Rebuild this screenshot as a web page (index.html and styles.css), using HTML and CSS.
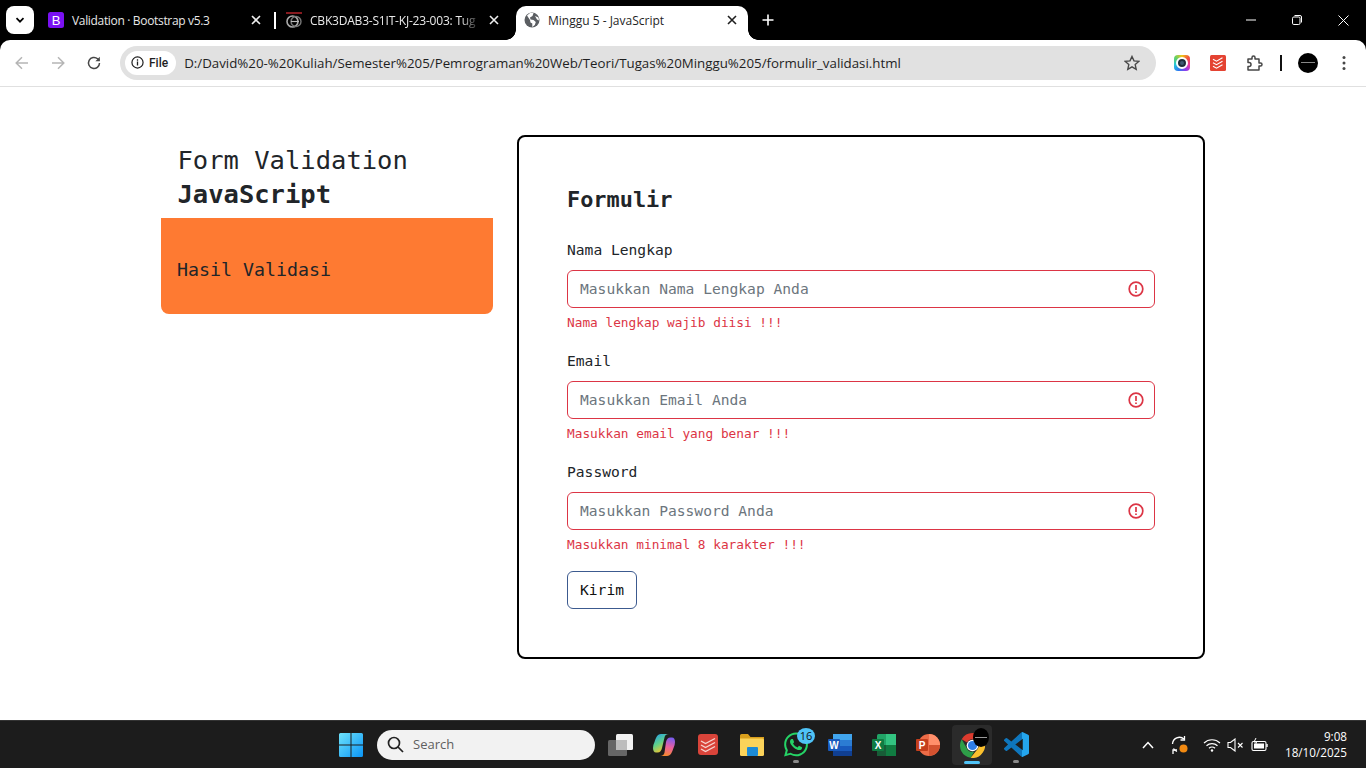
FILE: index.html
```html
<!DOCTYPE html>
<html lang="id">
<head>
<meta charset="utf-8">
<title>Minggu 5 - JavaScript</title>
<link rel="stylesheet" href="styles.css">
</head>
<body>
<div class="tabstrip">
  <div class="tabsearch"><svg width="12" height="12" viewBox="0 0 12 12"><path d="M2.500 4.200 6 7.700l3.500-3.500" fill="none" stroke="#000" stroke-width="1.700"/></svg></div>
  <div class="tab t1">
    <svg class="fav" width="16" height="16" viewBox="0 0 16 16"><rect width="16" height="16" rx="2.500" fill="#7a11f2"/><text x="8" y="13" text-anchor="middle" class="favb">B</text></svg>
    <span class="tabtitle">Validation · Bootstrap v5.3</span>
    <svg class="tabx" width="10" height="10" viewBox="0 0 10 10"><path d="M1 1l8 8M9 1l-8 8" stroke="#eee" stroke-width="1.600"/></svg>
  </div>
  <div class="tabsep"></div>
  <div class="tab t2">
    <svg class="fav" width="16" height="16" viewBox="0 0 16 16"><path d="M0 1h16" stroke="#b3232a" stroke-width="1.500"/><circle cx="6.500" cy="9.500" r="5.500" fill="none" stroke="#aaa" stroke-width="1.600"/><circle cx="10" cy="9.500" r="5" fill="none" stroke="#777" stroke-width="1.400"/><path d="M5 9.500h8" stroke="#bbb" stroke-width="1.200"/></svg>
    <span class="tabtitle fade">CBK3DAB3-S1IT-KJ-23-003: Tug</span>
    <svg class="tabx" width="10" height="10" viewBox="0 0 10 10"><path d="M1 1l8 8M9 1l-8 8" stroke="#eee" stroke-width="1.600"/></svg>
  </div>
  <div class="tab active">
    <svg class="fav" width="16" height="16" viewBox="0 0 16 16"><circle cx="8" cy="8" r="7.500" fill="#5b5e62"/><path d="M3 3.500 6 8l.5 2.500 1.800 1V15l2.500-2 1-3L9.500 8l-3-.5L6 5.500 8.500 4l1-3L6 1zM11 4l3.500 1.500.5 3-2-1z" fill="#fff"/></svg>
    <span class="tabtitle">Minggu 5 - JavaScript</span>
    <svg class="tabx" width="10" height="10" viewBox="0 0 10 10"><path d="M1 1l8 8M9 1l-8 8" stroke="#1f1f1f" stroke-width="1.600"/></svg>
  </div>
  <svg class="newtab" width="12" height="12" viewBox="0 0 12 12"><path d="M6 .5v11M.5 6h11" stroke="#fff" stroke-width="1.600"/></svg>
  <div class="winctl">
    <svg width="10" height="10" viewBox="0 0 10 10"><path d="M0 5h10" stroke="#fff"/></svg>
    <svg width="10" height="10" viewBox="0 0 10 10"><rect x=".5" y="2" width="7.500" height="7.500" rx="1.300" fill="none" stroke="#fff"/><path d="M2.500.5H8A1.500 1.500 0 0 1 9.500 2v5.500" fill="none" stroke="#fff"/></svg>
    <svg width="11" height="11" viewBox="0 0 11 11"><path d="M.5.5l10 10M10.500.5l-10 10" stroke="#fff"/></svg>
  </div>
</div>
<div class="toolbar">
  <svg class="navicon first" width="16" height="16" viewBox="0 0 16 16"><path d="M14 8H2.500M8 2.200 2.200 8 8 13.800" fill="none" stroke="#b5b5b5" stroke-width="1.500"/></svg>
  <svg class="navicon" width="16" height="16" viewBox="0 0 16 16"><path d="M2 8h11.500M8 2.200 13.800 8 8 13.800" fill="none" stroke="#b5b5b5" stroke-width="1.500"/></svg>
  <svg class="navicon" width="16" height="16" viewBox="0 0 16 16"><path d="M13.500 8A5.500 5.500 0 1 1 11.600 3.800L13.500 5.500" fill="none" stroke="#474747" stroke-width="1.500"/><path d="M13.800 1.800v4.400H9.400z" fill="#474747"/></svg>
  <div class="omnibox">
    <div class="chip"><svg width="13" height="13" viewBox="0 0 14 14"><circle cx="7" cy="7" r="6" fill="none" stroke="#1f1f1f" stroke-width="1.300"/><path d="M7 6v4.200M7 3.500v1.500" stroke="#1f1f1f" stroke-width="1.400"/></svg><span>File</span></div>
    <span class="url">D:/David%20-%20Kuliah/Semester%205/Pemrograman%20Web/Teori/Tugas%20Minggu%205/formulir_validasi.html</span>
    <svg class="star" width="16" height="16" viewBox="0 0 16 16"><path d="M8 1.500l2 4.400 4.800.5-3.600 3.200 1 4.700L8 11.900l-4.200 2.400 1-4.700L1.200 6.400 6 5.900z" fill="none" stroke="#474747" stroke-width="1.400"/></svg>
  </div>
  <div class="exts">
    <div class="rainbow"><span class="lens"></span></div>
    <svg class="todo" width="16" height="16" viewBox="0 0 16 16"><rect width="16" height="16" rx="1.500" fill="#e44332"/><path d="M3 4.200 6.500 6.200 12.500 2.800M3 7.700 6.500 9.700 12.500 6.300M3 11.200 6.500 13.200 12.500 9.800" fill="none" stroke="#fff" stroke-width="1.100"/></svg>
    <svg width="18" height="18" viewBox="0 0 18 18"><path d="M2 5h4V3.500a1.500 1.500 0 0 1 3 0V5h4v4h1.500a1.500 1.500 0 0 1 0 3H13v4H2v-3.500h1a1.500 1.500 0 0 0 0-4H2z" fill="none" stroke="#474747" stroke-width="1.500" stroke-linejoin="round"/></svg>
    <div class="extsep"></div>
    <div class="avatar"><span class="avatar-line"></span></div>
    <svg width="4" height="16" viewBox="0 0 4 16"><circle cx="2" cy="2.500" r="1.500" fill="#474747"/><circle cx="2" cy="8" r="1.500" fill="#474747"/><circle cx="2" cy="13.500" r="1.500" fill="#474747"/></svg>
  </div>
</div>
<main class="page">
  <div class="layout">
    <aside class="side">
      <h1 class="heading">Form Validation <strong>JavaScript</strong></h1>
      <div class="result">Hasil Validasi</div>
    </aside>
    <section class="card">
      <h2 class="card-title">Formulir</h2>
      <div class="field">
        <label class="label">Nama Lengkap</label>
        <div class="input"><span>Masukkan Nama Lengkap Anda</span><svg class="err" width="16" height="16" viewBox="0 0 16 16"><circle cx="8" cy="8" r="6.800" fill="none" stroke="#dc3545" stroke-width="1.700"/><path d="M8 4v5M8 10.400v1.700" stroke="#dc3545" stroke-width="1.700"/></svg></div>
        <div class="msg">Nama lengkap wajib diisi !!!</div>
      </div>
      <div class="field">
        <label class="label">Email</label>
        <div class="input"><span>Masukkan Email Anda</span><svg class="err" width="16" height="16" viewBox="0 0 16 16"><circle cx="8" cy="8" r="6.800" fill="none" stroke="#dc3545" stroke-width="1.700"/><path d="M8 4v5M8 10.400v1.700" stroke="#dc3545" stroke-width="1.700"/></svg></div>
        <div class="msg">Masukkan email yang benar !!!</div>
      </div>
      <div class="field">
        <label class="label">Password</label>
        <div class="input"><span>Masukkan Password Anda</span><svg class="err" width="16" height="16" viewBox="0 0 16 16"><circle cx="8" cy="8" r="6.800" fill="none" stroke="#dc3545" stroke-width="1.700"/><path d="M8 4v5M8 10.400v1.700" stroke="#dc3545" stroke-width="1.700"/></svg></div>
        <div class="msg">Masukkan minimal 8 karakter !!!</div>
      </div>
      <button class="btn" type="button">Kirim</button>
    </section>
  </div>
</main>
<footer class="taskbar">
  <div class="tasks">
    <svg width="24" height="24" viewBox="0 0 24 24"><defs><linearGradient id="win" x1="0" y1="0" x2="1" y2="1"><stop offset="0" stop-color="#6fe3fb"/><stop offset="1" stop-color="#0a94f5"/></linearGradient></defs><path d="M0 1.500A1.500 1.500 0 0 1 1.500 0h10v11.500H0zM12.500 0h10A1.500 1.500 0 0 1 24 1.500v10H12.500zM0 12.500h11.500V24h-10A1.500 1.500 0 0 1 0 22.500zM12.500 12.500H24v10a1.500 1.500 0 0 1-1.500 1.500h-10z" fill="url(#win)"/></svg>
    <div class="search"><svg width="17" height="17" viewBox="0 0 17 17"><circle cx="7" cy="7" r="5.500" fill="none" stroke="#222" stroke-width="1.700"/><path d="M11 11l5 5" stroke="#222" stroke-width="1.700"/></svg><span>Search</span></div>
    <div class="cell first-cell"><svg width="25" height="22" viewBox="0 0 25 22"><rect x="8" width="17" height="16" rx="1.500" fill="#f2f2f2"/><rect y="6" width="19" height="16" rx="1.500" fill="#666"/><rect x="8" y="6" width="11" height="10" fill="#bdbdbd"/></svg></div>
    <div class="cell"><svg width="22" height="24" viewBox="0 0 22 24"><defs><linearGradient id="cpa" x1="0" y1="0" x2=".5" y2="1"><stop offset="0" stop-color="#1f9cf0"/><stop offset=".55" stop-color="#5fd08a"/><stop offset="1" stop-color="#f5c52c"/></linearGradient><linearGradient id="cpb" x1=".6" y1="0" x2=".4" y2="1"><stop offset="0" stop-color="#7a5cf0"/><stop offset=".5" stop-color="#ec5f9e"/><stop offset="1" stop-color="#f58a2c"/></linearGradient></defs><path d="M14 23H7c3 0 4-1.500 4.500-3.500L13 9c.5-2.500 2-4.500 4.500-4.500H19c2 0 3 2 3 4.500 0 2-.5 4-1.500 6C19 19 18 23 14 23z" fill="url(#cpb)"/><path d="M8 1h8c-3 0-4 1.500-4.500 3.500L9 15c-.5 2.500-2 4.500-4.500 4.500H3C1 19.500 0 17.500 0 15c0-2 .5-4 1.500-6C3 5 4 1 8 1z" fill="url(#cpa)"/></svg></div>
    <div class="cell"><svg width="20" height="21" viewBox="0 0 20 21"><rect width="20" height="21" rx="3" fill="#d9443a"/><path d="M3 7l4.500 2.500L17 4.500M3 11l4.500 2.500L17 8.500M3 15l4.500 2.500L17 12.500" fill="none" stroke="#f6d5d1" stroke-width="1.400"/></svg></div>
    <div class="cell"><svg width="24" height="22" viewBox="0 0 24 22"><path d="M0 1.500A1.500 1.500 0 0 1 1.500 0h6.500L10.500 3H24v6H0z" fill="#d99f1c"/><path d="M0 4.500h22.500A1.500 1.500 0 0 1 24 6v14.500a1.500 1.500 0 0 1-1.500 1.500h-21A1.500 1.500 0 0 1 0 20.500z" fill="#fbd35a"/><rect x="7" y="13" width="11" height="9" rx="1" fill="#1c8bd6"/></svg></div>
    <div class="cell dot"><svg width="24" height="25" viewBox="0 0 24 24"><path d="M17.472 14.382c-.297-.149-1.758-.867-2.030-.967-.273-.099-.471-.148-.670.150-.197.297-.767.966-.940 1.164-.173.199-.347.223-.644.075-.297-.150-1.255-.463-2.390-1.475-.883-.788-1.480-1.761-1.653-2.059-.173-.297-.018-.458.130-.606.134-.133.298-.347.446-.520.149-.174.198-.298.298-.497.099-.198.050-.371-.025-.520-.075-.149-.669-1.612-.916-2.207-.242-.579-.487-.500-.669-.510-.173-.008-.371-.010-.570-.010-.198 0-.520.074-.792.372-.272.297-1.040 1.016-1.040 2.479 0 1.462 1.065 2.875 1.213 3.074.149.198 2.096 3.200 5.077 4.487.709.306 1.262.489 1.694.625.712.227 1.360.195 1.871.118.571-.085 1.758-.719 2.006-1.413.248-.694.248-1.289.173-1.413-.074-.124-.272-.198-.570-.347m-5.421 7.403h-.004a9.870 9.870 0 0 1-5.031-1.378l-.361-.214-3.741.982.998-3.648-.235-.374a9.860 9.860 0 0 1-1.510-5.260c.001-5.450 4.436-9.884 9.888-9.884 2.640 0 5.122 1.030 6.988 2.898a9.825 9.825 0 0 1 2.893 6.994c-.003 5.450-4.437 9.884-9.885 9.884m8.413-18.297A11.815 11.815 0 0 0 12.050 0C5.495 0 .160 5.335.157 11.892c0 2.096.547 4.142 1.588 5.945L.057 24l6.305-1.654a11.882 11.882 0 0 0 5.683 1.448h.005c6.554 0 11.890-5.335 11.893-11.893a11.821 11.821 0 0 0-3.480-8.413z" fill="#25d366"/></svg><span class="badge">16</span></div>
    <div class="cell"><svg width="24" height="22" viewBox="0 0 24 22"><rect x="5" width="19" height="22" rx="1.500" fill="#2b7cd3"/><rect x="5" width="19" height="6" fill="#41a5ee"/><rect x="5" y="12" width="19" height="5" fill="#185abd"/><rect x="5" y="17" width="19" height="5" fill="#103f91"/><rect y="5" width="12" height="12" rx="1" fill="#185abd"/><text x="6" y="14.500" text-anchor="middle" class="offtext">W</text></svg></div>
    <div class="cell"><svg width="24" height="22" viewBox="0 0 24 22"><rect x="5" width="19" height="22" rx="1.500" fill="#21a366"/><rect x="14" width="10" height="11" fill="#33c481"/><rect x="5" y="11" width="9" height="11" fill="#185c37"/><rect x="14" y="11" width="10" height="11" fill="#107c41"/><rect y="5" width="12" height="12" rx="1" fill="#107c41"/><text x="6" y="14.500" text-anchor="middle" class="offtext">X</text></svg></div>
    <div class="cell"><svg width="24" height="22" viewBox="0 0 24 22"><circle cx="13" cy="11" r="11" fill="#ed6c47"/><path d="M13 0A11 11 0 0 1 24 11H13z" fill="#ff8f6b"/><path d="M13 11h11a11 11 0 0 1-5.500 9.500L13 22z" fill="#d35230"/><rect y="5" width="12" height="12" rx="1" fill="#c43e1c"/><text x="6" y="14.500" text-anchor="middle" class="offtext">P</text></svg></div>
    <div class="cell"><div class="chrome"><svg class="chrome-logo" width="25" height="25" viewBox="0 0 24 24"><path d="M12 0a12 12 0 0 1 10.390 6H12a6 6 0 0 0-5.200 3L1.600 6A12 12 0 0 1 12 0z" fill="#dc3b2e"/><path d="M1.600 6 6.800 15a6 6 0 0 0 6.900 2.750L10.200 23.860A12 12 0 0 1 1.600 6z" fill="#2e9e48"/><path d="M22.390 6H12a6 6 0 0 1 5.200 9L10.200 23.860A12 12 0 0 0 22.390 6z" fill="#fbc02d"/><circle cx="12" cy="12" r="5.600" fill="#fff"/><circle cx="12" cy="12" r="4.400" fill="#2f7ee6"/></svg><span class="tb-avatar"><span class="tb-line"></span></span><span class="active-pill"></span></div></div>
    <div class="cell dot"><svg width="25" height="25" viewBox="0 0 24 24"><defs><linearGradient id="vs" x1="0" y1="0" x2="1" y2="0"><stop offset=".72" stop-color="#0e76bd"/><stop offset=".72" stop-color="#24a6ee"/></linearGradient></defs><path d="M23.150 2.587 18.210.21a1.494 1.494 0 0 0-1.705.29l-9.460 8.630-4.120-3.128a.999.999 0 0 0-1.276.057L.327 7.261A1 1 0 0 0 .326 8.740L3.899 12 .326 15.260a1 1 0 0 0 .001 1.479L1.650 17.940a.999.999 0 0 0 1.276.057l4.120-3.128 9.460 8.630a1.492 1.492 0 0 0 1.704.290l4.942-2.377A1.500 1.500 0 0 0 24 20.060V3.939a1.500 1.500 0 0 0-.850-1.352zm-5.146 14.861L10.826 12l7.178-5.448v10.896z" fill="url(#vs)"/></svg></div>
  </div>
  <div class="tray">
    <svg width="12" height="8" viewBox="0 0 12 8"><path d="M1 7l5-5.500L11 7" fill="none" stroke="#fff" stroke-width="1.500"/></svg>
    <svg class="sync" width="20" height="20" viewBox="0 0 20 20"><path d="M2.500 9a7 7 0 0 1 11.500-5M3.500 13.500a7 7 0 0 0 3.500 3" fill="none" stroke="#fff" stroke-width="1.300"/><path d="M14.500 1v4h-4M3 19v-4h4" fill="none" stroke="#fff" stroke-width="1.300"/><circle cx="13.500" cy="13.500" r="4" fill="#f28a12"/></svg>
    <svg class="wifi" width="18" height="14" viewBox="0 0 18 14"><path d="M1 5a11.500 11.500 0 0 1 16 0M3.500 7.800a8 8 0 0 1 11 0M6 10.300a4.300 4.300 0 0 1 6 0" fill="none" stroke="#fff" stroke-width="1.200"/><circle cx="9" cy="12.500" r="1.200" fill="#fff"/></svg>
    <svg class="vol" width="17" height="14" viewBox="0 0 17 14"><path d="M1 4.500h2.500L8 1v12L3.500 9.500H1z" fill="none" stroke="#fff" stroke-width="1.100"/><path d="M11 5l4.500 4.500M15.500 5 11 9.500" stroke="#fff" stroke-width="1.100"/></svg>
    <svg class="batt" width="18" height="14" viewBox="0 0 18 14"><rect x="1" y="3.500" width="14" height="9" rx="1.500" fill="none" stroke="#fff" stroke-width="1.100"/><rect x="3" y="5.500" width="10" height="5" fill="#fff"/><path d="M16 6v3" stroke="#fff" stroke-width="1.400"/><path d="M5 0 3 4h2.500L4.500 7" fill="none" stroke="#fff"/></svg>
    <div class="clock"><span>9:08</span><span>18/10/2025</span></div>
  </div>
</footer>
</body>
</html>
```
FILE: styles.css
```css
* { box-sizing: border-box; }
html, body { margin: 0; height: 100%; }
body { display: flex; flex-direction: column; height: 768px; overflow: hidden; background: #000; font-family: "DejaVu Sans Mono", monospace; color: #212529; }

.tabstrip { position: relative; display: flex; align-items: center; height: 40px; flex: none; background: #000; padding-left: 6px; font-family: "Open Sans", "Noto Sans", sans-serif; }
.tabsearch { width: 28px; height: 28px; margin-right: 6px; border-radius: 8px; background: #fff; display: flex; align-items: center; justify-content: center; }
.tab { display: flex; align-items: center; height: 40px; padding: 0 8px; color: #e8e8e8; font-size: 12px; }
.t1 { width: 234px; }
.t1 .tabtitle { letter-spacing: -.33px; }
.t1 .tabx { margin-right: 5px; }
.t2 { width: 240px; padding-left: 10px; }
.t2 .tabx { margin-right: 9px; }
.tabsep { width: 2px; height: 17px; background: #fff; }
.fav { flex: none; margin-right: 8px; }
.favb { font: 400 13px "Liberation Sans", sans-serif; fill: #fff; }
.tabtitle { flex: 1; white-space: nowrap; }
.fade { letter-spacing: -.2px; -webkit-mask-image: linear-gradient(90deg, #000 88%, transparent 100%); mask-image: linear-gradient(90deg, #000 88%, transparent 100%); }
.tabx { flex: none; margin-left: 8px; margin-right: 6px; }
.active { position: relative; align-self: flex-end; width: 232px; height: 34px; padding-bottom: 6px; background: #fff; color: #1f1f1f; border-radius: 10px 10px 0 0; }
.active .tabx { margin-right: 3px; }
.active::before, .active::after { content: ""; position: absolute; bottom: 0; width: 10px; height: 10px; }
.active::before { left: -10px; background: radial-gradient(circle at 0 0, transparent 9.5px, #fff 10px); }
.active::after { right: -10px; background: radial-gradient(circle at 100% 0, transparent 9.5px, #fff 10px); }
.newtab { margin-left: 14px; }
.winctl { margin-left: auto; display: flex; align-items: center; gap: 36px; padding-right: 17px; }

.toolbar { display: flex; align-items: center; height: 47px; flex: none; background: #fff; border-bottom: 1px solid #e0e0e0; border-radius: 10px 10px 0 0; font-family: "Open Sans", "Noto Sans", sans-serif; padding-bottom: 1px; }
.navicon { margin-left: 20px; flex: none; }
.navicon.first { margin-left: 14px; }
.omnibox { display: flex; align-items: center; margin-left: 18px; width: 1036px; height: 34px; border-radius: 17px; background: #e1e1e1; padding: 0 16px 0 5px; }
.chip { display: flex; align-items: center; gap: 5px; height: 24px; background: #fff; border-radius: 12px; padding: 0 8px 0 6px; font: 500 12px Roboto, sans-serif; color: #1f1f1f; }
.url { margin-left: 8px; font-size: 13.300px; color: #1f1f1f; white-space: nowrap; flex: 1; }
.exts { display: flex; align-items: center; margin-left: 18px; }
.rainbow { display: flex; align-items: center; justify-content: center; width: 16px; height: 16px; margin-right: 20px; border-radius: 4px; background: conic-gradient(#f5c518, #f0503c, #ee3aa0, #8a3df0, #2a7cf0, #25c7d9, #5fd068, #f5c518); }
.lens { width: 12px; height: 12px; border-radius: 50%; background: #3e5a73; border: 2px solid #fff; box-shadow: inset 0 0 0 2px #1f2d3a; }
.todo { margin-right: 20px; }
.extsep { width: 2px; height: 16px; background: #111; margin: 0 16px; }
.avatar { width: 20px; height: 20px; border-radius: 50%; background: #000; display: flex; align-items: center; justify-content: center; margin-right: 24px; }
.avatar-line { width: 14px; height: 1px; background: #888; }

.page { flex: 1; min-height: 0; padding-top: 48px; background: #fff; }
.layout { width: 1044px; margin: 0 auto; display: flex; gap: 24px; align-items: flex-start; }
.side { width: 332px; flex: none; }
.heading { margin: 0; padding: 9px 16px 0 16.500px; font-size: 25.500px; font-weight: 400; line-height: 33.600px; height: 83px; }
.heading strong { display: block; font-weight: 700; }
.result { height: 96px; background: #fe7a32; border-radius: 0 0 8px 8px; padding: 40px 16px 0; font-size: 18.270px; line-height: 24px; }
.card { flex: 1; height: 524px; border: 2px solid #000; border-radius: 8px; padding: 48px; }
.card-title { margin: 0 0 24px; font-size: 21.900px; font-weight: 700; line-height: 29px; }
.field { height: 111px; }
.label { display: block; font-size: 14.610px; line-height: 24px; height: 32px; }
.input { display: flex; align-items: center; justify-content: space-between; height: 38px; border: 1px solid #dc3545; border-radius: 6px; padding: 0 10px 2px 12px; font-size: 14.610px; color: #6c757d; }
.err { margin-top: 2px; }
.msg { margin-top: 4px; font-size: 12.790px; line-height: 21px; color: #dc3545; }
.btn { display: block; width: 70px; height: 38px; padding: 0 0 2px; border: 1px solid #3c5a8f; border-radius: 6px; background: #fff; font: 14.610px "DejaVu Sans Mono", monospace; color: #111; }

.taskbar { position: relative; display: flex; align-items: center; justify-content: flex-end; height: 48px; flex: none; background: #1c1c1c; border-top: 1px solid #333; font-family: "Open Sans", "Noto Sans", sans-serif; }
.tasks { position: absolute; left: 339px; top: 0; height: 47px; display: flex; align-items: center; }
.search { display: flex; align-items: center; gap: 9px; width: 218px; height: 30px; margin-left: 14px; border-radius: 15px; background: #f2f2f2; padding-left: 10px; font-size: 13px; color: #5f5f5f; }
.search span { margin-top: -2px; }
.cell { position: relative; flex: none; width: 44px; height: 47px; display: flex; align-items: center; justify-content: center; }
.first-cell { margin-left: 3px; }
.badge { position: absolute; left: 23px; top: 7px; width: 18px; height: 16px; border-radius: 50%; background: #4fc3f7; color: #111; font-size: 11px; line-height: 16px; text-align: center; }
.dot::after { content: ""; position: absolute; left: 19px; top: 39px; width: 6px; height: 3px; border-radius: 2px; background: #8a8a8a; }
.chrome { position: relative; display: flex; align-items: center; justify-content: center; width: 40px; height: 40px; background: #2b2b2b; border-radius: 4px; }
.chrome-logo { margin-top: 2px; }
.tb-avatar { position: absolute; top: 3px; left: 21px; display: flex; align-items: center; justify-content: center; width: 16px; height: 19px; border-radius: 50%; background: #000; }
.tb-line { width: 12px; height: 1px; background: #999; }
.active-pill { position: absolute; left: 12px; bottom: 1px; width: 16px; height: 3px; border-radius: 2px; background: #4fc3f7; }
.offtext { font: 700 10px "Liberation Sans", sans-serif; fill: #fff; }
.tray { display: flex; align-items: center; padding-right: 19px; color: #fff; }
.sync { margin-left: 16px; }
.wifi { margin-left: 13px; }
.vol { margin-left: 6px; }
.batt { margin-left: 7px; }
.clock { display: flex; flex-direction: column; align-items: flex-end; margin-left: 16px; margin-top: -2px; font-size: 11.700px; line-height: 16px; }
```
